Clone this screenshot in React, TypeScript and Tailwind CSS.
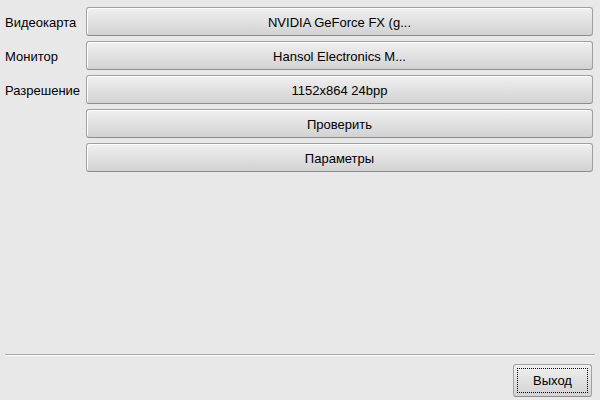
import React from 'react';

const font = { fontFamily: '"Liberation Sans", Arial, sans-serif' };

function GtkButton({ label }: { label: string }) {
  return (
    <button className="h-[29px] w-full rounded-[3px] border border-[#a0a0a0] border-b-[#8c8c8c] bg-gradient-to-b from-[#f0f0f0] to-[#d2d2d2] pt-[2px] text-[13px] text-black shadow-[inset_1px_1px_0_#ffffff]">
      {label}
    </button>
  );
}

const rows = [
  { label: 'Видеокарта', value: 'NVIDIA GeForce FX (g...' },
  { label: 'Монитор', value: 'Hansol Electronics M...' },
  { label: 'Разрешение', value: '1152x864 24bpp' },
  { label: '', value: 'Проверить' },
  { label: '', value: 'Параметры' },
];

export default function App() {
  return (
    <div className="flex h-[400px] w-[600px] flex-col bg-[#e8e8e8]" style={font}>
      {/* Settings rows */}
      <div className="grid grid-cols-[81px_1fr] gap-x-0 gap-y-[5px] pl-[5px] pr-[7px] pt-[7px]">
        {rows.map((r, i) => (
          <React.Fragment key={i}>
            <div className="flex items-center pt-[2px] text-[13px] text-black">{r.label}</div>
            <GtkButton label={r.value} />
          </React.Fragment>
        ))}
      </div>

      <div className="flex-1" />

      {/* Separator */}
      <div className="mx-[5px] border-t border-b border-t-[#a8a8a8] border-b-white" />

      {/* Footer */}
      <div className="flex justify-end pb-[3px] pr-[8px] pt-[8px]">
        <button className="h-[33px] w-[79px] rounded-[3px] border border-[#a0a0a0] border-b-[#8c8c8c] bg-gradient-to-b from-[#f0f0f0] to-[#d2d2d2] p-[3px] text-[13px] text-black">
          <span className="flex h-full w-full items-center justify-center border border-dotted border-black pt-[1px]">
            Выход
          </span>
        </button>
      </div>
    </div>
  );
}
